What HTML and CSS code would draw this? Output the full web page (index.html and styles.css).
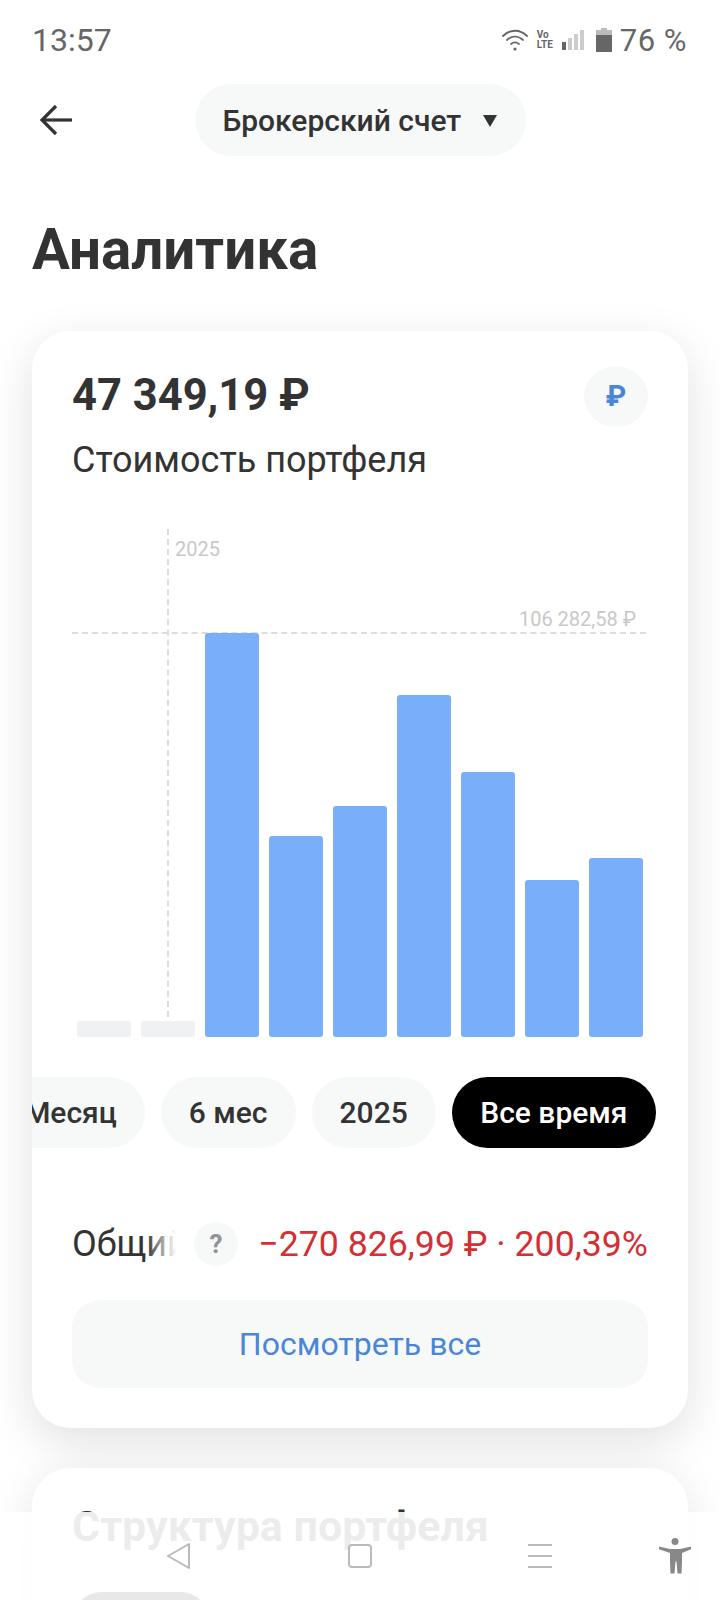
FILE: index.html
```html
<!doctype html>
<html lang="ru">
<head>
	<meta charset="UTF-8" />
	<title>Аналитика</title>
	<link rel="stylesheet" href="styles.css">
</head>
<body>
	<div class="screen">
		<div class="status">
			<span class="time">13:57</span>
			<div class="status-right">
				<svg class="ic-wifi" width="26" height="22" viewBox="0 0 26 22" fill="none" stroke="#666" stroke-width="1.8" stroke-linecap="round">
					<path d="M1 7 C8 0 18 0 25 7"/>
					<path d="M5 11 C10 6.500 16 6.500 21 11"/>
					<path d="M9 15 C11.500 13 14.500 13 17 15"/>
					<circle cx="13" cy="20" r="1.600" fill="#666" stroke="none"/>
				</svg>
				<span class="volte">Vo<br>LTE</span>
				<svg class="ic-signal" width="22" height="20" viewBox="0 0 22 20">
					<rect x="0" y="12" width="4" height="8" fill="#666"/>
					<rect x="6" y="8" width="4" height="12" fill="#ccc"/>
					<rect x="12" y="4" width="4" height="16" fill="#ccc"/>
					<rect x="18" y="0" width="4" height="20" fill="#ccc"/>
				</svg>
				<svg class="ic-batt" width="16" height="24" viewBox="0 0 16 24">
					<path d="M5 0h6v2h5v6H0V2h5z" fill="#bbb"/>
					<rect x="0" y="7" width="16" height="17" fill="#666"/>
				</svg>
				<span class="batt-text">76 %</span>
			</div>
		</div>

		<div class="topbar">
			<svg class="back" width="34" height="32" viewBox="0 0 34 32" fill="none" stroke="#333" stroke-width="3.200">
				<path d="M33 16H3"/>
				<path d="M17 2L3 16l14 14"/>
			</svg>
			<div class="account">
				<span>Брокерский счет</span>
				<i class="caret"></i>
			</div>
		</div>

		<h1 class="title">Аналитика</h1>

		<section class="card">
			<div class="card-head">
				<div>
					<div class="amount">47 349,19 ₽</div>
					<div class="sub">Стоимость портфеля</div>
				</div>
				<div class="cur">₽</div>
			</div>

			<div class="chart">
				<div class="line-v"></div>
				<div class="line-h"></div>
				<span class="lbl-year">2025</span>
				<span class="lbl-max">106 282,58 ₽</span>
				<div class="bars">
					<div class="bar empty"></div>
					<div class="bar empty"></div>
					<div class="bar" style="height:404px"></div>
					<div class="bar" style="height:201px"></div>
					<div class="bar" style="height:231px"></div>
					<div class="bar" style="height:342px"></div>
					<div class="bar" style="height:265px"></div>
					<div class="bar" style="height:157px"></div>
					<div class="bar" style="height:179px"></div>
				</div>
			</div>

			<div class="chips">
				<a class="chip">Месяц</a>
				<a class="chip">6 мес</a>
				<a class="chip">2025</a>
				<a class="chip active">Все время</a>
			</div>

			<div class="total">
				<div class="total-name">Общий</div>
				<div class="help">?</div>
				<div class="total-val">−270 826,99 ₽ · 200,39%</div>
			</div>

			<a class="more">Посмотреть все</a>
		</section>

		<section class="card card2">
			<h2 class="card-title">Структура портфеля</h2>
			<div class="tab"></div>
		</section>

		<div class="navbar">
			<svg class="nav-back" width="24" height="26" viewBox="0 0 24 26" fill="none" stroke="#bbb" stroke-width="2" stroke-linejoin="round"><path d="M23 1L2 13l21 12z"/></svg>
			<svg class="nav-home" width="24" height="24" viewBox="0 0 24 24" fill="none" stroke="#bbb" stroke-width="2"><rect x="1" y="1" width="22" height="22" rx="3"/></svg>
			<div class="burger"><i></i><i></i><i></i></div>
			<svg class="nav-acc" width="32" height="36" viewBox="0 0 32 36" fill="#888"><circle cx="16" cy="3.500" r="3.500"/><path d="M0 8.500l11 2.500h10l11-2.500.5 2.500-9.500 4v8.500l-.5 12h-4l-1-12h-1l-1 12h-4l-.5-12V15L-.5 11z"/></svg>
		</div>
	</div>
</body>
</html>
```

FILE: styles.css
```css
*{
	margin: 0;
	padding: 0;
	box-sizing: border-box;
}
body{
	background: #fff;
	font-family: Roboto, "Noto Sans", sans-serif;
	color: #333;
}
.screen{
	position: relative;
	width: 720px;
	height: 1600px;
	overflow: hidden;
	background: #fff;
}

/* status bar */
.status{
	height: 80px;
	padding: 0 33px 0 32px;
	display: flex;
	align-items: center;
	justify-content: space-between;
	color: #666;
}
.time{
	font-size: 32px;
}
.status-right{
	display: flex;
	align-items: center;
}
.ic-wifi{
	margin-right: 9px;
}
.volte{
	width: 14px;
	font-size: 10px;
	line-height: 10px;
	font-weight: 700;
	margin-right: 11px;
}
.ic-signal{
	margin-right: 12px;
}
.ic-batt{
	margin-right: 8px;
}
.batt-text{
	font-size: 31px;
	letter-spacing: .5px;
}

/* top */
.topbar{
	position: relative;
	height: 72px;
	margin-top: 4px;
	display: flex;
	justify-content: center;
	align-items: center;
}
.back{
	position: absolute;
	left: 39px;
	top: 20px;
}
.account{
	width: 331px;
	height: 72px;
	border-radius: 36px;
	background: #f7f9f9;
	display: flex;
	align-items: center;
	padding-left: 28px;
	font-size: 30px;
	font-weight: 500;
}
.caret{
	width: 0;
	height: 0;
	margin: 2px 0 0 22px;
	border-left: 7.500px solid transparent;
	border-right: 7.500px solid transparent;
	border-top: 12px solid #333;
}
.title{
	margin: 63px 0 50px 32px;
	font-size: 56.500px;
	line-height: 62px;
	font-weight: 700;
}

/* cards */
.card{
	width: 656px;
	margin-left: 32px;
	background: #fff;
	border-radius: 38px;
	box-shadow: 0 14px 48px rgba(0,0,0,.12);
	overflow: hidden;
	padding: 36px 40px 40px;
	height: 1097px;
}
.card-head{
	display: flex;
	justify-content: space-between;
}
.amount{
	font-size: 43.500px;
	line-height: 58px;
	font-weight: 700;
}
.sub{
	margin-top: 13px;
	font-size: 36px;
	line-height: 44px;
}
.cur{
	width: 64px;
	height: 61px;
	margin-top: -1px;
	border-radius: 50%;
	background: #f7f9f9;
	color: #4a86d8;
	font-size: 29px;
	font-weight: 700;
	text-align: center;
	line-height: 61px;
}

/* chart */
.chart{
	position: relative;
	height: 507px;
	margin-top: 48px;
}
.line-v{
	position: absolute;
	left: 95px;
	top: -1px;
	bottom: 0;
	border-left: 2px dashed #ddd;
}
.line-h{
	position: absolute;
	left: 0;
	right: 2px;
	top: 102px;
	border-top: 2px dashed #ddd;
}
.lbl-year{
	position: absolute;
	left: 103px;
	top: 7px;
	font-size: 20px;
	color: #c8c8c8;
}
.lbl-max{
	position: absolute;
	right: 12px;
	top: 77px;
	font-size: 20px;
	color: #c8c8c8;
}
.bars{
	position: absolute;
	left: 5px;
	bottom: 0;
	display: flex;
	align-items: flex-end;
	gap: 10px;
}
.bar{
	width: 54px;
	background: #79aefa;
	border-radius: 3px;
}
.bar.empty{
	height: 16px;
	background: #f0f1f2;
}

/* period chips */
.chips{
	display: flex;
	justify-content: flex-end;
	gap: 16px;
	margin: 40px -8px 0 0;
}
.chip{
	flex: none;
	height: 71px;
	padding: 0 28px;
	border-radius: 36px;
	background: #f7f9f9;
	font-size: 30px;
	font-weight: 500;
	line-height: 71px;
}
.chip.active{
	padding: 0 28.500px;
	background: #000;
	color: #fff;
}

/* total row */
.total{
	display: flex;
	align-items: center;
	height: 44px;
	margin-top: 74px;
}
.total-name{
	position: relative;
	width: 104px;
	overflow: hidden;
	white-space: nowrap;
	font-size: 36px;
}
.total-name::after{
	content: "";
	position: absolute;
	right: 0;
	top: 0;
	bottom: 0;
	width: 30px;
	background: linear-gradient(to right, rgba(255,255,255,0), #fff);
}
.help{
	width: 44px;
	height: 44px;
	margin-left: 18px;
	border-radius: 50%;
	background: #f7f9f9;
	color: #8f9499;
	font-size: 26px;
	font-weight: 700;
	text-align: center;
	line-height: 44px;
}
.total-val{
	margin-left: auto;
	font-size: 35.700px;
	color: #d32f35;
	white-space: nowrap;
}
.more{
	display: block;
	height: 88px;
	margin-top: 34px;
	border-radius: 28px;
	background: #f7f9f9;
	color: #4a86d8;
	font-size: 32px;
	line-height: 88px;
	text-align: center;
}

.card2{
	margin-top: 40px;
	height: 400px;
}
.card-title{
	margin-top: -1px;
	font-size: 43px;
	line-height: 46px;
	font-weight: 700;
}
.tab{
	width: 138px;
	height: 60px;
	margin-top: 43px;
	border-radius: 30px;
	background: #000;
}

/* android buttons over the page */
.navbar{
	position: absolute;
	left: 0;
	right: 0;
	bottom: 0;
	height: 88px;
	background: rgba(255,255,255,.91);
	display: flex;
	align-items: center;
	padding-left: 166px;
}
.nav-home{
	margin-left: 158px;
}
.burger{
	width: 24px;
	margin-left: 156px;
}
.burger i{
	display: block;
	height: 2px;
	background: #bbb;
	margin-bottom: 9px;
}
.burger i:last-child{
	margin-bottom: 0;
}
.nav-acc{
	margin-left: 107px;
}
```
